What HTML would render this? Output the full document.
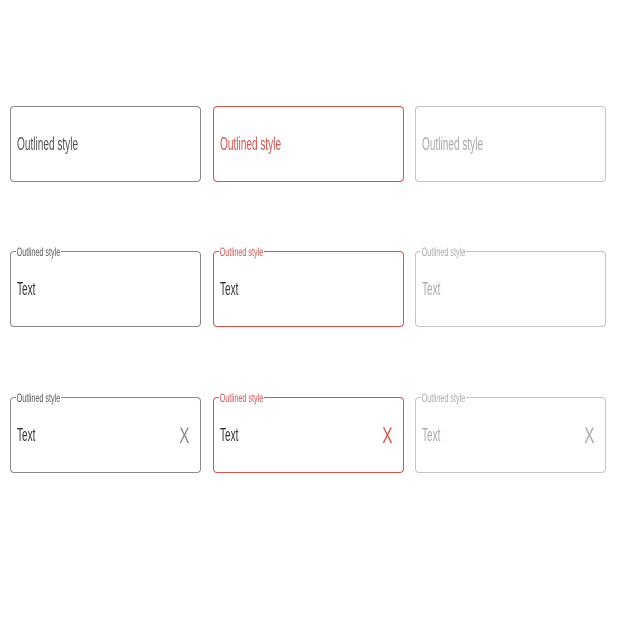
<!DOCTYPE html>
<html><head><style>
body{margin:0;width:640px;height:640px;background:#fff;position:relative;font-family:"Liberation Sans",sans-serif;overflow:hidden}
.b{position:absolute;width:189px;height:74px;border:1px solid #8a8a8a;border-radius:4px;box-sizing:content-box}
.r{border-color:#d9534f}
.d{border-color:#c4c4c4}
.t{position:absolute;left:6px;top:27px;font-size:18px;transform:scaleX(.56);transform-origin:left center;white-space:nowrap;color:#333}
.lab{position:absolute;left:5px;top:-7px;background:#fff;padding:0 1px;font-size:12px;transform:scaleX(.6);transform-origin:left center;white-space:nowrap;color:#555}
.x{position:absolute;right:8px;top:25px;font-size:22px;font-weight:100;transform:scaleX(.7);color:#888}
.r .t,.r .lab,.r .x{color:#d9534f}
.d .t,.d .lab,.d .x{color:#aaa}
.e .t{color:#555}
</style></head><body>
<div class="b e" style="left:10px;top:106px"><div class="t">Outlined style</div></div>
<div class="b r" style="left:213px;top:106px"><div class="t">Outlined style</div></div>
<div class="b d" style="left:415px;top:106px"><div class="t">Outlined style</div></div>

<div class="b" style="left:10px;top:251px"><div class="lab">Outlined style</div><div class="t">Text</div></div>
<div class="b r" style="left:213px;top:251px"><div class="lab">Outlined style</div><div class="t" style="color:#333">Text</div></div>
<div class="b d" style="left:415px;top:251px"><div class="lab">Outlined style</div><div class="t">Text</div></div>

<div class="b" style="left:10px;top:397px"><div class="lab">Outlined style</div><div class="t">Text</div><div class="x">X</div></div>
<div class="b r" style="left:213px;top:397px"><div class="lab">Outlined style</div><div class="t" style="color:#333">Text</div><div class="x">X</div></div>
<div class="b d" style="left:415px;top:397px"><div class="lab">Outlined style</div><div class="t">Text</div><div class="x">X</div></div>
</body></html>
